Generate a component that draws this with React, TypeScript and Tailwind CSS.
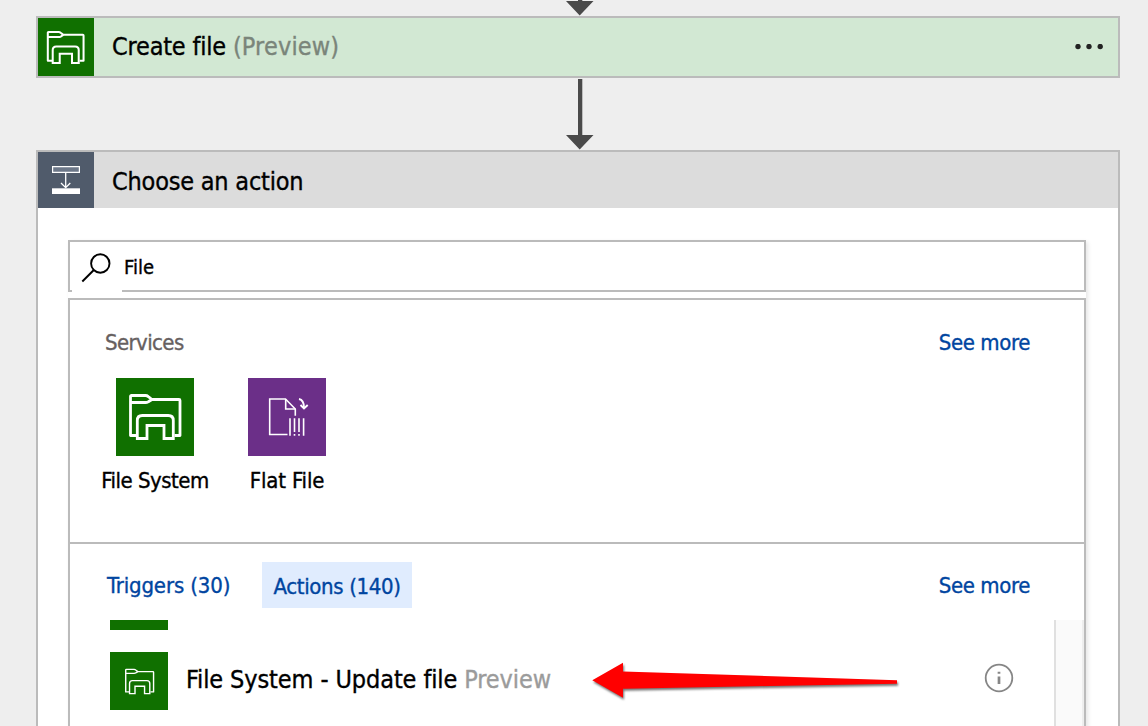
function ExplorerGlyph({ className, stroke }: { className: string; stroke: number }) {
  return (
    <svg viewBox="0 0 54 48" className={className} fill="none" stroke="#fff" strokeWidth={stroke} strokeLinejoin="round">
      <path d="M8.500 42.500H2.500V3.500Q2.500 2.500 3.500 2.500H17.500Q19 2.500 20.300 3.600L24 6.500H51Q52 6.500 52 7.500V42.500H46.500" />
      <path d="M2.500 9.500H17.500Q19 9.500 20.300 8.800L24 6.500" />
      <path d="M9.300 45.500V27.500Q9.300 22.500 14.300 22.500H40.300Q45.300 22.500 45.300 27.500V45.500H36V32.500H19V45.500Z" strokeLinejoin="miter" />
    </svg>
  );
}

function FlatFileGlyph() {
  return (
    <svg viewBox="0 0 78 78" className="size-[78px]" fill="none" stroke="#fff" strokeWidth="1.600">
      <path d="M39.500 56.500H21.700V21H37.500L47.300 31V37.700" />
      <path d="M37.700 21V31H47.300" />
      <path d="M42 40.300V57.700M55.600 40.300V57.700M46.500 40.300V54M51 40.300V54M46.500 56V57.700M51 56V57.700" />
      <path d="M51 21Q56 22 56 30" strokeWidth="1.900" />
      <path d="M52.500 27L56 30.500L59.700 27" strokeWidth="1.900" />
    </svg>
  );
}

function ActionGlyph() {
  return (
    <svg viewBox="0 0 28 28" className="size-7" fill="none" stroke="#fff">
      <path d="M.6 .6H27.400V6.400H.6Z" fill="#6c7788" strokeWidth="1.200" />
      <path d="M13.700 7V22M9 17L13.700 21.700L18.300 17" strokeWidth="1.300" />
      <path d="M0 22.300H28V28H0Z" fill="#fff" stroke="none" />
    </svg>
  );
}

function DownArrow() {
  return (
    <svg viewBox="0 0 28 71" className="h-[71px] w-7 shrink-0" fill="#4a4a4a">
      <path d="M12 0H16.300V56H27.500L13.700 70.500L0 56H12Z" />
    </svg>
  );
}

function Connector({ className }: { className: string }) {
  return (
    <div className={`flex w-[1084px] shrink-0 items-end justify-center pl-1 ${className}`}>
      <DownArrow />
    </div>
  );
}

const LINK = "text-[22px] leading-[30px] text-[#0045a0]";

export default function App() {
  return (
    <div className="flex h-[726px] w-[1148px] flex-col overflow-hidden bg-[#eeeeee] pl-9 font-['DejaVu_Sans_Condensed','DejaVu_Sans',sans-serif] whitespace-nowrap text-black [-webkit-text-stroke:0.35px]">
      <Connector className="h-4" />

      <div className="flex h-[62px] w-[1084px] shrink-0 items-center border-2 border-[#bbbbbb] bg-[#d2e8d3]">
        <div className="flex h-full w-14 items-center justify-center bg-[#107000] pr-px">
          <ExplorerGlyph className="h-[35px] w-[39px]" stroke={2.8} />
        </div>
        <div className="ml-[18px] flex flex-1 text-[25px] leading-[30px]">
          <span className="tracking-[-0.2px]">Create file</span>
          <span className="ml-[7px] tracking-[0.15px] text-[#7a857a]">(Preview)</span>
        </div>
        <svg viewBox="0 0 30 6" className="mr-[14px] h-1.5 w-[30px]" fill="#222">
          <circle cx="4" cy="2.500" r="2.700" />
          <circle cx="15" cy="2.500" r="2.700" />
          <circle cx="26.200" cy="2.500" r="2.700" />
        </svg>
      </div>

      <Connector className="h-[72px]" />

      <div className="flex h-[600px] w-[1084px] shrink-0 flex-col border-2 border-[#bbbbbb] bg-white">
        <div className="flex h-14 shrink-0 items-center bg-[#dcdcdc]">
          <div className="flex size-14 items-center justify-center bg-[#505b6b]">
            <ActionGlyph />
          </div>
          <span className="ml-[18px] pt-[3px] text-[25px] leading-[30px] tracking-[-0.2px]">Choose an action</span>
        </div>

        <div className="mt-8 ml-[30px] flex w-[1018px] flex-1 flex-col shadow-[2px_2px_4px_rgba(0,0,0,0.1)]">
          <div className="relative flex h-[52px] shrink-0 items-center border-2 border-[#bbbbbb]">
            <div className="absolute -bottom-0.5 left-0.5 h-0.5 w-[50px] bg-white" />
            <svg viewBox="0 0 30 32" className="mt-0.5 ml-[11px] h-8 w-[30px]" fill="none" stroke="#000" strokeWidth="1.900">
              <circle cx="19.300" cy="12.500" r="9.200" />
              <path d="M12.800 19L1.300 30.500" />
            </svg>
            <span className="ml-[13px] pt-0.5 text-[20px] leading-[26px]">File</span>
          </div>

          <div className="mt-1.5 flex flex-1 flex-col border-2 border-[#bbbbbb]">
            <div className="h-[242px] shrink-0 pt-7">
              <div className="flex justify-between pr-[54px] pl-[35px]">
                <span className="text-[22px] leading-[30px] tracking-[-0.6px] text-[#666060]">Services</span>
                <span className={`tracking-[-0.4px] ${LINK}`}>See more</span>
              </div>
              <div className="mt-5 flex pl-[19px]">
                <div className="flex w-[132px] flex-col items-center">
                  <div className="flex size-[78px] items-center justify-center bg-[#107000]">
                    <ExplorerGlyph className="h-12 w-[54px]" stroke={2.8} />
                  </div>
                  <span className="mt-2.5 text-[22px] leading-[30px] tracking-[-0.5px]">File System</span>
                </div>
                <div className="flex w-[132px] flex-col items-center">
                  <div className="bg-[#6b2f88]">
                    <FlatFileGlyph />
                  </div>
                  <span className="mt-2.5 text-[22px] leading-[30px] tracking-[-0.15px]">Flat File</span>
                </div>
              </div>
            </div>

            <div className="flex h-[78px] shrink-0 items-start border-t-2 border-[#bbbbbb] pt-[18px] pl-[37px]">
              <span className={`w-[125px] pt-[9px] tracking-[-0.15px] ${LINK}`}>Triggers (30)</span>
              <div className="ml-[30px] flex h-[46px] w-[150px] items-center justify-center bg-[#e0ecfe] pt-1">
                <span className={`tracking-[-0.35px] ${LINK}`}>Actions (140)</span>
              </div>
              <span className={`mr-[54px] ml-auto pt-[9px] tracking-[-0.4px] ${LINK}`}>See more</span>
            </div>

            <div className="flex flex-1">
              <div className="flex-1 pl-10">
                <div className="h-2.5 w-[58px] bg-[#107000]" />
                <div className="mt-[22px] flex h-[58px] items-center">
                  <div className="flex size-[58px] items-center justify-center bg-[#107000] pt-px">
                    <ExplorerGlyph className="h-[27px] w-[31px]" stroke={2.5} />
                  </div>
                  <div className="ml-[18px] flex pb-[3px] text-[25px] leading-[30px]">
                    <span className="tracking-[-0.1px]">File System - Update file</span>
                    <span className="ml-[7px] tracking-[-0.1px] text-[#9b9b9b]">Preview</span>
                  </div>
                  <svg viewBox="0 0 310 42" className="ml-auto h-[42px] w-[310px] [filter:drop-shadow(1px_2px_1px_rgba(0,0,0,0.55))]" fill="#f00">
                    <path d="M2.300 20.200L33 2.800V11.500L307 20.300V23.800L33 28.700V37.700Z" />
                  </svg>
                  <svg viewBox="0 0 30 30" className="mr-10 ml-[84px] size-[30px] -translate-y-[3px]" fill="none" stroke="#868686">
                    <circle cx="15" cy="15" r="13.300" strokeWidth="1.800" />
                    <path d="M15 8.700V10.700M15 13.500V21" strokeWidth="2.700" />
                  </svg>
                </div>
              </div>
              <div className="w-[30px] border-r-2 border-l-2 border-r-[#eeeeee] border-l-[#e0e0e0] bg-[#fafafa]" />
            </div>
          </div>
        </div>
      </div>
    </div>
  );
}
